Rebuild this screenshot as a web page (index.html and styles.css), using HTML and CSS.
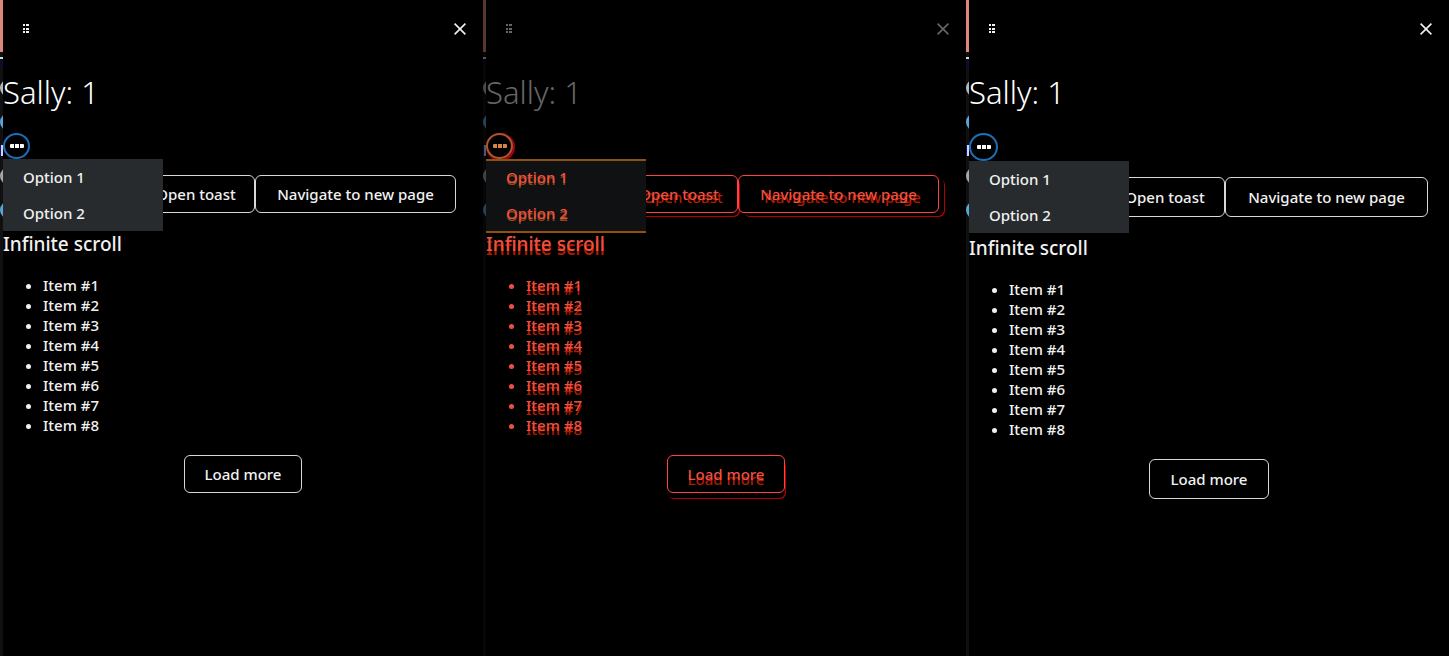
FILE: index.html
```html
<!DOCTYPE html>
<html lang="en">
<head>
<meta charset="utf-8">
<title>Sally: 1</title>
<link rel="stylesheet" href="styles.css">
</head>
<body>
<svg class="defs" aria-hidden="true">
  <defs>
    <symbol id="edge" viewBox="0 0 3 656">
      <rect width="3" height="656" fill="#101010"/>
      <rect width="3" height="52" fill="#dc8879"/>
      <rect y="57" width="3" height="2" fill="#c9dcec"/>
      <rect x="2" y="60" width="1" height="8" fill="#08086a"/>
      <circle cx="9" cy="88" r="9" fill="#b9b7b5"/>
      <circle cx="9" cy="122" r="9" fill="#5ba6d6"/>
      <rect y="145" width="1" height="11" fill="#10108c"/>
      <rect x="1" y="145" width="2" height="11" fill="#d5d5e5"/>
      <circle cx="9" cy="176" r="9" fill="#a9a7a5"/>
      <circle cx="9" cy="210" r="9" fill="#5ba6d6"/>
    </symbol>
    <symbol id="grip" viewBox="0 0 7 10">
      <path d="M1 0h2v2H1zM4 0h3v2H4zM1 4h2v2H1zM4 4h3v2H4zM1 7h2v2H1zM4 7h3v2H4z" fill="currentColor"/>
    </symbol>
    <symbol id="close" viewBox="0 0 12 12">
      <path d="M.6.6l10.8 10.8M11.4.6L.6 11.4" fill="none" stroke="currentColor" stroke-width="1.6"/>
    </symbol>
    <symbol id="dots" viewBox="0 0 14 4">
      <path d="M1 0h3v4H1a1 1 0 0 1-1-1V1a1 1 0 0 1 1-1zM5 0h4v4H5zM10 0h3a1 1 0 0 1 1 1v2a1 1 0 0 1-1 1h-3z" fill="currentColor"/>
    </symbol>
  </defs>
</svg>
<main class="panels">
  <section class="panel">
    <svg class="edge" preserveAspectRatio="xMinYMin slice" aria-hidden="true"><use href="#edge" width="3" height="656"/></svg>
    <div class="content">
      <header class="bar">
        <svg class="grip" aria-hidden="true"><use href="#grip"/></svg>
        <button class="close" aria-label="Close"><svg><use href="#close"/></svg></button>
      </header>
      <h1 class="title">Sally: 1</h1>
      <div class="options">
        <button class="more" aria-label="More options"><svg><use href="#dots"/></svg></button>
        <div class="menu" role="menu"><button class="item" role="menuitem">Option 1</button><button class="item" role="menuitem">Option 2</button></div>
      </div>
      <div class="actions"><button class="btn toast">Open toast</button><button class="btn navigate">Navigate to new page</button></div>
      <h2 class="subtitle">Infinite scroll</h2>
      <ul class="list"><li>Item #1</li><li>Item #2</li><li>Item #3</li><li>Item #4</li><li>Item #5</li><li>Item #6</li><li>Item #7</li><li>Item #8</li></ul>
      <button class="btn load">Load more</button>
    </div>
  </section>
  <section class="panel diff">
    <svg class="edge" preserveAspectRatio="xMinYMin slice" aria-hidden="true"><use href="#edge" width="3" height="656"/></svg>
    <div class="content">
      <header class="bar">
        <svg class="grip" aria-hidden="true"><use href="#grip"/></svg>
        <button class="close" aria-label="Close"><svg><use href="#close"/></svg></button>
      </header>
      <h1 class="title">Sally: 1</h1>
      <div class="options">
        <button class="more" aria-label="More options"><svg><use href="#dots"/></svg></button>
        <div class="menu" role="menu"><button class="item" role="menuitem">Option 1</button><button class="item" role="menuitem">Option 2</button></div>
      </div>
      <div class="actions"><button class="btn toast">Open toast</button><button class="btn navigate">Navigate to new page</button></div>
      <h2 class="subtitle">Infinite scroll</h2>
      <ul class="list"><li>Item #1</li><li>Item #2</li><li>Item #3</li><li>Item #4</li><li>Item #5</li><li>Item #6</li><li>Item #7</li><li>Item #8</li></ul>
      <button class="btn load">Load more</button>
    </div>
  </section>
  <section class="panel roomy">
    <svg class="edge" preserveAspectRatio="xMinYMin slice" aria-hidden="true"><use href="#edge" width="3" height="656"/></svg>
    <div class="content">
      <header class="bar">
        <svg class="grip" aria-hidden="true"><use href="#grip"/></svg>
        <button class="close" aria-label="Close"><svg><use href="#close"/></svg></button>
      </header>
      <h1 class="title">Sally: 1</h1>
      <div class="options">
        <button class="more" aria-label="More options"><svg><use href="#dots"/></svg></button>
        <div class="menu" role="menu"><button class="item" role="menuitem">Option 1</button><button class="item" role="menuitem">Option 2</button></div>
      </div>
      <div class="actions"><button class="btn toast">Open toast</button><button class="btn navigate">Navigate to new page</button></div>
      <h2 class="subtitle">Infinite scroll</h2>
      <ul class="list"><li>Item #1</li><li>Item #2</li><li>Item #3</li><li>Item #4</li><li>Item #5</li><li>Item #6</li><li>Item #7</li><li>Item #8</li></ul>
      <button class="btn load">Load more</button>
    </div>
  </section>
</main>
</body>
</html>
```
FILE: styles.css
```css
* { box-sizing: border-box; }
body {
  margin: 0;
  background: #000;
  color: #f1f1f1;
  font: 500 15px/20px "Noto Sans", "Open Sans", sans-serif;
}
button { font: inherit; color: inherit; background: none; border: 0; padding: 0; }
.defs { position: absolute; width: 0; height: 0; }
.panels { display: grid; grid-template-columns: repeat(3, 1fr); min-height: 100vh; }
.panel { display: grid; grid-template-columns: 3px 1fr; }
.edge { width: 3px; height: 100%; background: #101010; }
.content { display: flex; flex-direction: column; min-width: 0; }
.bar {
  display: flex;
  align-items: center;
  justify-content: space-between;
  height: 58px;
  padding: 0 17px 0 19px;
}
.grip { width: 7px; height: 10px; }
.close { display: flex; }
.close svg { width: 12px; height: 12px; }
.title { margin: 13px 0 0; font-size: 31px; line-height: 42px; font-weight: 300; color: #fff; }
.options { position: relative; display: flex; margin-top: 20px; }
.more {
  display: flex;
  align-items: center;
  justify-content: center;
  width: 27px;
  height: 26px;
  border: 2px solid #1b6fb8;
  border-radius: 50%;
  color: #fff;
}
.more svg { width: 14px; height: 4px; }
.menu {
  position: absolute;
  top: 100%;
  left: 0;
  z-index: 1;
  display: flex;
  flex-direction: column;
  width: 160px;
  background: #272b2e;
}
.item { height: 36px; padding: 0 20px; text-align: left; }
.actions { display: flex; margin-top: 16px; padding-left: 134px; }
.btn {
  height: 38px;
  border: 1px solid #d8d8d8;
  border-radius: 6px;
  white-space: nowrap;
}
.toast { width: 118px; }
.navigate { width: 201px; }
.subtitle { margin: 18px 0 0; font-size: 19px; line-height: 26px; font-weight: 500; }
.list { margin: 18px 0 0; padding-left: 40px; }
.load { align-self: center; width: 118px; margin-top: 20px; }

.roomy .more { width: 29px; height: 28px; }
.roomy .actions { padding-left: 136px; }
.roomy .btn { height: 40px; }
.roomy .toast { width: 120px; }
.roomy .navigate { width: 203px; }
.roomy .load { width: 120px; }

.diff { color: #f0503f; }
.diff .edge { opacity: 0.4; }
.diff .bar, .diff .title { color: #666; }
.diff .more { border-color: #b0542c; color: #d98645; box-shadow: 1px 1px 0 1px #a50018; }
.diff .menu { background: #0f1112; box-shadow: inset 0 2px #92500f, 0 2px #92500f; }
.diff .item { text-shadow: 0 2px #8a4a1a; }
.diff .btn { border-color: #ff4242; text-shadow: 4px 3px #b01c00; }
.diff .toast { box-shadow: 1px 3px #000, 2px 4px #b50000; }
.diff .navigate { box-shadow: 5px 3px #000, 6px 4px #b50000; }
.diff .load { box-shadow: 0 5px #000, 1px 6px #b50000; text-shadow: 0 5px #b01c00; }
.diff .subtitle, .diff .list { text-shadow: 0 4px #b01c00; }
```
